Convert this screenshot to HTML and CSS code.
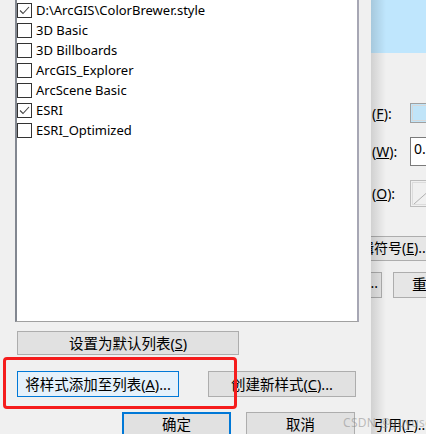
FILE: index.html
```html
<!DOCTYPE html>
<html lang="zh-CN">
<head>
    <meta charset="UTF-8">
    <title>样式参考</title>
    <link rel="stylesheet" href="styles.css">
</head>
<body>

<div class="screen">
    <!-- Ventana delantera: lista de estilos -->
    <div class="dialog">
        <div class="style-list">
            <label class="item"><span class="box"><svg viewBox="0 0 13 13"><polyline points="2,6.5 5,9.5 11,3"/></svg></span>D:\ArcGIS\ColorBrewer.style</label>
            <label class="item"><span class="box"></span>3D Basic</label>
            <label class="item"><span class="box"></span>3D Billboards</label>
            <label class="item"><span class="box"></span>ArcGIS_Explorer</label>
            <label class="item"><span class="box"></span>ArcScene Basic</label>
            <label class="item"><span class="box"><svg viewBox="0 0 13 13"><polyline points="2,6.5 5,9.5 11,3"/></svg></span>ESRI</label>
            <label class="item"><span class="box"></span>ESRI_Optimized</label>
        </div>

        <div class="row row-default">
            <button class="btn btn-default">设置为默认列表(<u>S</u>)</button>
        </div>

        <div class="row row-add">
            <button class="btn btn-hot btn-add">将样式添加至列表(<u>A</u>)...</button>
            <button class="btn btn-new">创建新样式(<u>C</u>)...</button>
            <div class="mark"></div>
        </div>

        <div class="row row-ok">
            <button class="btn btn-ok">确定</button>
            <button class="btn btn-cancel">取消</button>
        </div>
    </div>

    <!-- Ventana de atrás (parcialmente tapada) -->
    <div class="behind">
        <div class="behind-head"></div>
        <div class="field field-f"><span class="lbl">(<u>F</u>):</span><span class="swatch"></span></div>
        <div class="field field-w"><span class="lbl">(<u>W</u>):</span><span class="textbox">0.</span></div>
        <div class="field field-o"><span class="lbl">(<u>O</u>):</span><span class="nobox"><svg viewBox="0 0 20 26"><line x1="3" y1="23" x2="20" y2="8"/></svg></span></div>
        <div class="back-btn back-edit">编辑符号(<u>E</u>)...</div>
        <div class="back-row">
            <div class="back-btn back-small">...</div>
            <div class="back-btn back-reset">重置</div>
        </div>
        <div class="back-ref">引用(<u>F</u>)...</div>
    </div>

    <div class="watermark">CSDN @yuyuseek</div>
</div>

</body>
</html>
```

FILE: styles.css
```css
* {
    margin: 0;
    padding: 0;
    box-sizing: border-box;
}

body {
    font-family: 'Noto Sans', 'Noto Sans CJK SC', sans-serif;
    font-size: 14px;
    color: #000;
    background: #f0f0f0;
    overflow: hidden;
}

.screen {
    position: relative;
    width: 426px;
    height: 434px;
    display: flex;
    overflow: hidden;
}

.dialog {
    width: 371px;
    flex-shrink: 0;
    background: #f0f0f0;
}

.style-list {
    margin-left: 15px;
    width: 344px;
    height: 322px;
    background: #fff;
    border-left: 2px solid #828790;
    border-right: 2px solid #a7a7b4;
    border-bottom: 1px solid #a0a0a0;
    font-size: 13px;
}

.item {
    display: flex;
    align-items: center;
    height: 20px;
    line-height: 20px;
    white-space: nowrap;
}

.box {
    width: 15px;
    height: 15px;
    border: 1px solid #333;
    background: #fff;
    margin-right: 4px;
    display: flex;
}

.box svg {
    width: 13px;
    height: 13px;
}

.box polyline {
    fill: none;
    stroke: #444;
    stroke-width: 1.1;
}

.row {
    display: flex;
    position: relative;
}

.btn {
    font-family: 'Noto Sans', 'Noto Sans CJK SC', sans-serif;
    font-size: 14.5px;
    color: #000;
    background: #e1e1e1;
    border: 1px solid #adadad;
    line-height: 1;
    white-space: nowrap;
    flex-shrink: 0;
}

.btn u {
    text-decoration: underline;
    text-underline-offset: 1px;
}

.row-default {
    margin-top: 9px;
}

.btn-default {
    margin-left: 17px;
    width: 222px;
    height: 24px;
}

.row-add {
    margin-top: 16px;
}

.btn-add {
    margin-left: 17px;
    width: 162px;
    height: 26px;
}

.btn-hot {
    background: #e5f1fb;
    border-color: #0078d7;
}

.btn-new {
    margin-left: 29px;
    width: 148px;
    height: 26px;
}

.mark {
    position: absolute;
    left: 3px;
    top: -14px;
    width: 234px;
    height: 52px;
    border: 3px solid #f51c1c;
    border-radius: 4px;
}

.row-ok {
    margin-top: 15px;
}

.btn-ok {
    margin-left: 122px;
    width: 109px;
    height: 28px;
    border: 2px solid #0078d7;
    padding-bottom: 4px;
}

.btn-cancel {
    margin-left: 15px;
    width: 109px;
    height: 28px;
    padding-bottom: 4px;
}

/* ventana de atrás */
.behind {
    position: relative;
    flex: 1;
    overflow: hidden;
    background: #f0f0f0;
}

.behind::after {
    content: '';
    position: absolute;
    left: 0;
    top: 0;
    bottom: 0;
    width: 15px;
    background: linear-gradient(to right, rgba(0, 0, 0, 0.13), rgba(0, 0, 0, 0));
}

.behind-head {
    height: 53px;
    background: #bfe6fd;
}

.field {
    display: flex;
    align-items: center;
    padding-left: 1px;
    white-space: nowrap;
}

.field > span {
    flex-shrink: 0;
}

.lbl {
    width: 38px;
}

.field-f {
    margin-top: 50px;
    height: 20px;
}

.swatch {
    width: 30px;
    height: 20px;
    border: 1px solid #a0a0a0;
    outline: 1px solid #d8d8d8;
    outline-offset: -3px;
    background: #c0e4f8;
}

.field-w {
    margin-top: 14px;
    height: 29px;
}

.textbox {
    width: 30px;
    height: 29px;
    border: 1px solid #7a7a7a;
    background: #fff;
    padding: 3px 0 0 3px;
    line-height: 16px;
}

.field-o {
    margin-top: 14px;
    height: 27px;
}

.nobox {
    width: 30px;
    height: 27px;
    border: 1px solid #bcbcbc;
    outline: 1px solid #dcdcdc;
    outline-offset: -3px;
    display: flex;
}

.nobox svg {
    width: 20px;
    height: 26px;
}

.nobox line {
    stroke: #b0b0b0;
    stroke-width: 1;
}

.back-btn {
    background: #e6e6e6;
    border: 1px solid #adadad;
    white-space: nowrap;
    line-height: 22px;
    flex-shrink: 0;
}

.back-edit {
    margin-top: 29px;
    margin-left: -26px;
    width: 120px;
    height: 25px;
}

.back-row {
    display: flex;
    margin-top: 11px;
}

.back-small {
    margin-left: -40px;
    width: 51px;
    height: 26px;
    text-align: right;
    padding-right: 3px;
    line-height: 20px;
}

.back-reset {
    margin-left: 11px;
    width: 60px;
    height: 26px;
    padding-left: 18px;
    font-size: 15px;
}

.back-ref {
    margin-top: 118px;
    margin-left: 3px;
    white-space: nowrap;
    line-height: 18px;
}

.watermark {
    position: absolute;
    left: 343px;
    top: 414px;
    font-size: 12px;
    color: rgba(140, 140, 140, 0.55);
    white-space: nowrap;
    letter-spacing: 0.3px;
}
```
